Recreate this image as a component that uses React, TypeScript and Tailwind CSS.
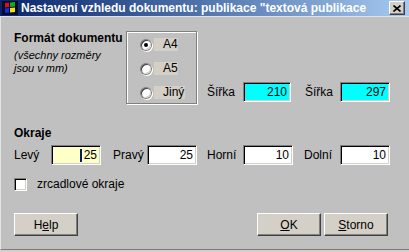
import React from "react";

const font = { fontFamily: '"Liberation Sans", Arial, sans-serif' };

function Field({ value, w = "w-[50px]", bg = "bg-white", caret = false }: { value: string; w?: string; bg?: string; caret?: boolean }) {
	return (
		<div
			className={`${w} h-[20px] ${bg} border border-t-[#808080] border-l-[#808080] border-b-white border-r-white shadow-[inset_1px_1px_0_#000,inset_-1px_-1px_0_#d4d0c8] flex items-center justify-end pr-[3px] text-[12px] leading-[14px] text-black`}
		>
			{caret && <span className="w-[2px] h-[13px] bg-[#0a1a5a] mr-[2px]" />}
			{value}
		</div>
	);
}

function Label({ text, w, className = "" }: { text: string; w: string; className?: string }) {
	return <div className={`${w} ${className} text-[12px] leading-[14px] text-black`}>{text}</div>;
}

function Radio({ label, checked = false, w }: { label: string; checked?: boolean; w: string }) {
	return (
		<div className="flex items-center h-[13px] pl-[13px]">
			<div className="w-[12px] h-[12px] rounded-full bg-[#808080] p-px shadow-[1px_1px_0_#fff]">
				<div className="w-full h-full rounded-full bg-white shadow-[inset_1px_1px_0_#404040,inset_-1px_-1px_0_#d4d0c8] flex items-center justify-center">
					{checked && <div className="w-[4px] h-[4px] rounded-full bg-black" />}
				</div>
			</div>
			<div className={`${w} ml-[2px] h-[13px] bg-[#d4d0c8] pl-[9px] text-[12px] leading-[13px] text-black`}>{label}</div>
		</div>
	);
}

function Button({ children }: { children: React.ReactNode }) {
	return (
		<button className="w-[64px] h-[23px] bg-[#d4d0c8] border border-t-white border-l-white border-b-[#404040] border-r-[#404040] shadow-[inset_-1px_-1px_0_#808080] text-[12px] leading-[14px] text-black flex items-center justify-center">
			{children}
		</button>
	);
}

export default function App() {
	return (
		<div className="w-[409px] h-[252px] flex flex-col bg-[#d4d0c8] overflow-hidden" style={font}>
			<div className="h-[16px] flex items-center bg-linear-to-r from-[#0a246a] to-[#a6caf0]">
				<svg className="ml-[2px]" width="16" height="16" viewBox="0 0 16 16">
					<rect x="0" y="1" width="16" height="14" fill="#0a0a30" />
					<path d="M3 3 L7 2.5 L7 7 L3 7.5 Z" fill="#e01010" />
					<path d="M8 2.5 L13 2 L13 6.5 L8 7 Z" fill="#10b010" />
					<path d="M3 8.5 L7 8 L7 12.5 L3 13 Z" fill="#1030f0" />
					<path d="M8 8 L13 7.5 L13 12 L8 12.5 Z" fill="#f0e010" />
				</svg>
				<span className="ml-[3px] text-white font-bold text-[12px] leading-[16px] whitespace-nowrap">
					Nastavení vzhledu dokumentu: publikace "textová publikace
				</span>
				<div className="ml-auto mr-[4px] w-[16px] h-[14px] bg-[#d4d0c8] border border-t-white border-l-white border-b-[#404040] border-r-[#404040] shadow-[inset_-1px_-1px_0_#808080] flex items-center justify-center">
					<svg width="8" height="7" viewBox="0 0 8 7">
						<path d="M0.5 0.5 L7.5 6.5 M7.5 0.5 L0.5 6.5" stroke="#000" strokeWidth="1.6" />
					</svg>
				</div>
			</div>

			<div className="h-[234px] bg-[#c0c0c0] border-t border-l border-t-[#e4e4e4] border-l-[#e4e4e4] border-b border-b-[#7a7a7a] flex flex-col pl-[13px]">
				<div className="mt-[14px] flex items-start">
					<div className="w-[112px]">
						<div className="font-bold text-[12px] leading-[14px] text-black">Formát dokumentu</div>
						<div className="mt-[4px] italic text-[11px] leading-[13px] text-black">
							(všechny rozměry
							<br />
							jsou v mm)
						</div>
					</div>
					<div className="w-[71px] h-[73px] border border-[#808080] shadow-[1px_1px_0_#fff,inset_1px_1px_0_#fff] flex flex-col pt-[6px] gap-[11px]">
						<Radio label="A4" checked w="w-[24px]" />
						<Radio label="A5" w="w-[24px]" />
						<Radio label="Jiný" w="w-[31px]" />
					</div>
					<div className="ml-[10px] mt-[51px] flex items-center">
						<Label text="Šířka" w="w-[36px]" />
						<Field value="210" w="w-[48px]" bg="bg-[#00ffff]" />
						<Label text="Šířka" w="w-[35px]" className="ml-[14px]" />
						<Field value="297" bg="bg-[#00ffff]" />
					</div>
				</div>

				<div className="mt-[22px] font-bold text-[12px] leading-[14px] text-black">Okraje</div>

				<div className="mt-[5px] flex items-center">
					<Label text="Levý" w="w-[37px]" />
					<Field value="25" bg="bg-[#ffffc8]" caret />
					<Label text="Pravý" w="w-[34px]" className="ml-[12px]" />
					<Field value="25" />
					<Label text="Horní" w="w-[36px]" className="ml-[10px]" />
					<Field value="10" />
					<Label text="Dolní" w="w-[36px]" className="ml-[11px]" />
					<Field value="10" />
				</div>

				<div className="mt-[13px] flex items-center h-[13px]">
					<div className="w-[13px] h-[13px] bg-white border border-t-[#808080] border-l-[#808080] border-b-white border-r-white shadow-[inset_1px_1px_0_#000,inset_-1px_-1px_0_#d4d0c8]" />
					<div className="ml-[10px] text-[12px] leading-[13px] text-black">zrcadlové okraje</div>
				</div>

				<div className="mt-[22px] flex items-center justify-between pr-[21px]">
					<Button>
						H<span className="underline">e</span>lp
					</Button>
					<div className="flex gap-[3px]">
						<Button>
							<span className="underline">O</span>K
						</Button>
						<Button>
							<span className="underline">S</span>torno
						</Button>
					</div>
				</div>
			</div>
			<div className="h-[2px] bg-[#d4d0c8]" />
		</div>
	);
}
